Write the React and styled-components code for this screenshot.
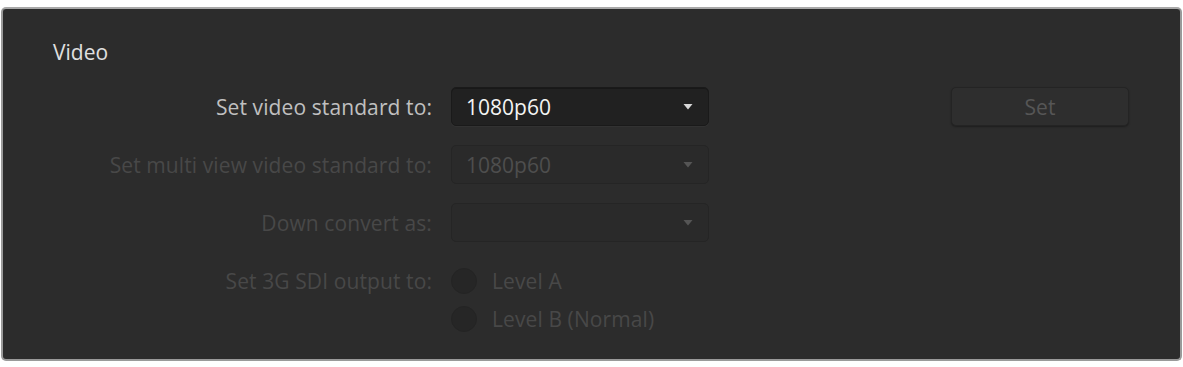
import React from "react";
import styled, { createGlobalStyle } from "styled-components";

const Global = createGlobalStyle`
  html, body { margin: 0; padding: 0; background: #ffffff; }
  body { font-family: "Open Sans", "Noto Sans", sans-serif; }
`;

const Page = styled.div`
  padding: 7px 1px 6px 1px;
  width: 1183px;
  box-sizing: border-box;
`;

const Panel = styled.section`
  box-sizing: border-box;
  height: 354px;
  background: #2c2c2c;
  border: 2px solid #9a9a9a;
  border-top-color: #a8a8a8;
  border-radius: 5px;
  padding: 27px 0 0 0;
`;

const Title = styled.h2`
  margin: 0 0 0 50px;
  font-size: 21px;
  font-weight: 400;
  color: #e0e0e0;
  line-height: 32px;
`;

const Form = styled.div`
  margin-top: 19px;
  display: grid;
  grid-template-columns: 448px 259px 241px 178px;
  align-items: start;
`;

const Label = styled.div`
  grid-column: 1;
  text-align: right;
  padding-right: 19px;
  font-size: 21px;
  letter-spacing: 0.1px;
  color: ${(p) => (p.$disabled ? "#484848" : "#c0c0c0")};
  white-space: nowrap;
  height: 58px;
  line-height: 40px;
`;

const SelectBox = styled.div`
  grid-column: 2;
  box-sizing: border-box;
  height: 39px;
  margin-right: 1px;
  border-radius: 5px;
  background: ${(p) => (p.$disabled ? "#2a2a2a" : "#212121")};
  border: 1px solid ${(p) => (p.$disabled ? "#252525" : "#1a1a1a")};
  box-shadow: ${(p) =>
    p.$disabled ? "none" : "inset 0 1px 0 rgba(0,0,0,0.25), 0 1px 0 rgba(255,255,255,0.03)"};
  display: flex;
  align-items: center;
  justify-content: space-between;
  padding: 0 15px 0 14px;
  font-size: 21px;
  color: ${(p) => (p.$disabled ? "#4e4e4e" : "#f4f4f4")};
`;

const Caret = styled.svg`
  width: 10px;
  height: 7px;
  flex: none;
`;

const SetButton = styled.button`
  grid-column: 4;
  box-sizing: border-box;
  height: 39px;
  width: 178px;
  border-radius: 5px;
  background: #2e2e2e;
  border: 1px solid #242424;
  box-shadow: 0 1px 2px rgba(0, 0, 0, 0.35);
  font-family: inherit;
  font-size: 21px;
  color: #565656;
  padding: 0;
`;

const RadioGroup = styled.div`
  grid-column: 2 / span 2;
  display: flex;
  flex-direction: column;
  gap: 12px;
  padding-top: 7px;
`;

const RadioRow = styled.label`
  display: flex;
  align-items: center;
  gap: 15px;
  font-size: 21px;
  letter-spacing: 0.1px;
  color: #484848;
  line-height: 26px;
`;

const RadioDot = styled.span`
  width: 26px;
  height: 26px;
  border-radius: 50%;
  background: #262626;
  border: 1px solid #242424;
  box-sizing: border-box;
`;

const Dropdown = ({ value, disabled }) => (
  <SelectBox $disabled={disabled}>
    <span>{value}</span>
    <Caret viewBox="0 0 10 7">
      <path d="M0.5 1 L9.5 1 L5 6.5 Z" fill={disabled ? "#555" : "#d8d8d8"} />
    </Caret>
  </SelectBox>
);

export default function App() {
  return (
    <>
      <Global />
      <Page>
        <Panel>
          <Title>Video</Title>
          <Form>
            <Label>Set video standard to:</Label>
            <Dropdown value="1080p60" />
            <SetButton>Set</SetButton>

            <Label $disabled>Set multi view video standard to:</Label>
            <Dropdown value="1080p60" disabled />

            <Label $disabled>Down convert as:</Label>
            <Dropdown value="" disabled />

            <Label $disabled>Set 3G SDI output to:</Label>
            <RadioGroup>
              <RadioRow>
                <RadioDot />
                Level A
              </RadioRow>
              <RadioRow>
                <RadioDot />
                Level B (Normal)
              </RadioRow>
            </RadioGroup>
          </Form>
        </Panel>
      </Page>
    </>
  );
}
